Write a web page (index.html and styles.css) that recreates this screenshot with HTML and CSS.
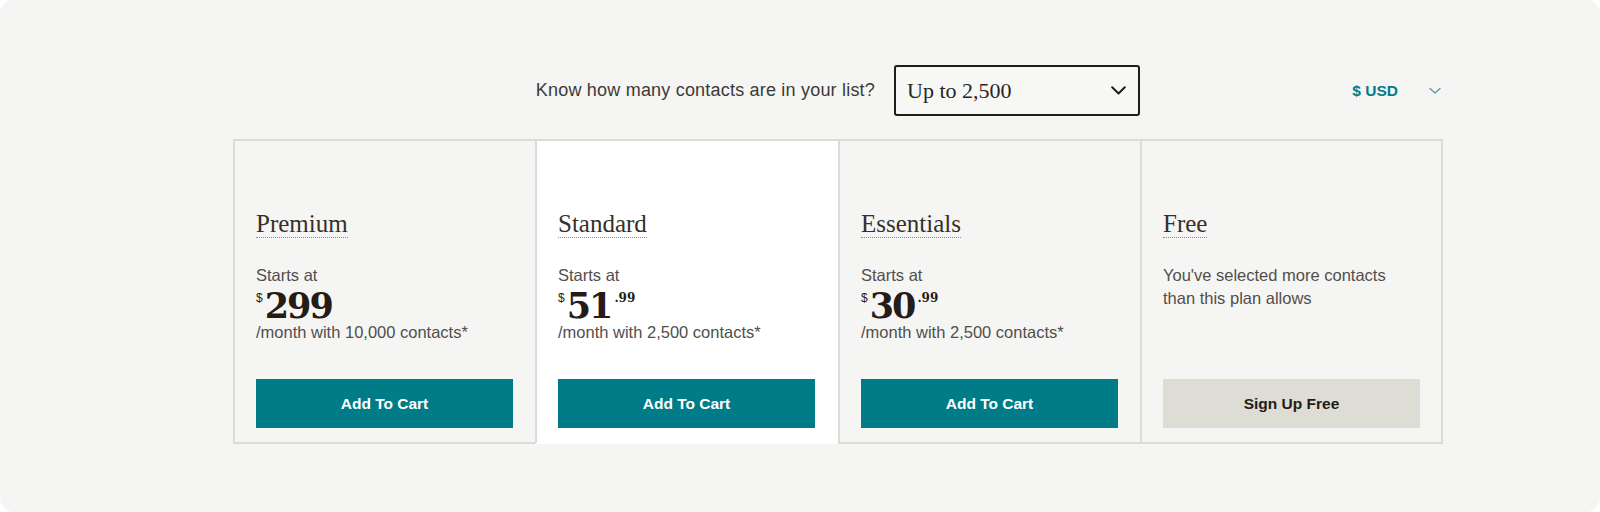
FILE: index.html
```html
<!DOCTYPE html>
<html lang="en">
<head>
<meta charset="utf-8">
<title>Pricing</title>
<link rel="stylesheet" href="styles.css">
</head>
<body>
<div class="panel">
  <div class="content">
    <div class="toolbar">
      <div class="contacts">
        <span class="contacts-label">Know how many contacts are in your list?</span>
        <div class="select">
          <span class="select-value">Up to 2,500</span>
          <svg class="select-chevron" width="15" height="9" viewBox="0 0 15 9"><path d="M1.2 1.2 L7.5 7.5 L13.8 1.2" fill="none" stroke="#241c15" stroke-width="2" stroke-linecap="round" stroke-linejoin="round"/></svg>
        </div>
      </div>
      <div class="currency">
        <span class="currency-value">$ USD</span>
        <svg class="currency-chevron" width="12" height="8" viewBox="0 0 12 8"><path d="M1 1.5 L6 6 L11 1.5" fill="none" stroke="#5a9ca4" stroke-width="1.4" stroke-linecap="round" stroke-linejoin="round"/></svg>
      </div>
    </div>

    <div class="plans">
      <div class="plan">
        <h2 class="plan-name"><span>Premium</span></h2>
        <p class="starts">Starts at</p>
        <p class="price"><sup class="cur">$</sup><span class="amount">299</span></p>
        <p class="per">/month with 10,000 contacts*</p>
        <a class="btn btn-primary">Add To Cart</a>
      </div>
      <div class="plan plan-featured">
        <h2 class="plan-name"><span>Standard</span></h2>
        <p class="starts">Starts at</p>
        <p class="price"><sup class="cur">$</sup><span class="amount">51</span><sup class="cents">.99</sup></p>
        <p class="per">/month with 2,500 contacts*</p>
        <a class="btn btn-primary">Add To Cart</a>
      </div>
      <div class="plan">
        <h2 class="plan-name"><span>Essentials</span></h2>
        <p class="starts">Starts at</p>
        <p class="price"><sup class="cur">$</sup><span class="amount">30</span><sup class="cents">.99</sup></p>
        <p class="per">/month with 2,500 contacts*</p>
        <a class="btn btn-primary">Add To Cart</a>
      </div>
      <div class="plan">
        <h2 class="plan-name"><span>Free</span></h2>
        <p class="note">You've selected more contacts than this plan allows</p>
        <a class="btn btn-secondary">Sign Up Free</a>
      </div>
    </div>
  </div>
</div>
</body>
</html>
```

FILE: styles.css
```css
* { box-sizing: border-box; }

html, body {
  margin: 0;
  padding: 0;
  background: #ffffff;
}

body {
  font-family: "Liberation Sans", Arial, sans-serif;
  color: #241c15;
}

.panel {
  width: 1600px;
  height: 512px;
  background: #f5f5f3;
  border-radius: 14px;
  padding-top: 65px;
}

.content {
  width: 1210px;
  margin-left: 233px;
}

.toolbar {
  display: flex;
  align-items: center;
  height: 51px;
  margin-bottom: 23px;
}

.contacts {
  flex: 1;
  display: flex;
  align-items: center;
  justify-content: flex-end;
  gap: 19px;
}

.contacts-label {
  font-size: 18px;
  letter-spacing: 0.2px;
  color: #3b3a37;
}

.select {
  width: 246px;
  height: 51px;
  border: 2px solid #241c15;
  border-radius: 3px;
  display: flex;
  align-items: center;
  justify-content: space-between;
  padding: 0 12px 0 11px;
  background: #f7f7f5;
}

.select-value {
  font-family: "Liberation Serif", "Times New Roman", serif;
  font-size: 22px;
  color: #2b2520;
}

.currency {
  width: 303px;
  display: flex;
  align-items: center;
  justify-content: flex-end;
  gap: 31px;
  padding-right: 2px;
}

.currency-value {
  font-size: 15.5px;
  font-weight: bold;
  color: #007c89;
}

.plans {
  display: grid;
  grid-template-columns: 302px 303px 302px 303px;
}

.plan {
  display: flex;
  flex-direction: column;
  align-items: flex-start;
  padding: 69px 21px 14px 21px;
  border-top: 2px solid #dcdbd7;
  border-left: 2px solid #dcdbd7;
  border-bottom: 2px solid #dcdbd7;
  background: #f5f5f3;
}

.plan:last-child {
  border-right: 2px solid #dcdbd7;
}

.plan-featured {
  background: #ffffff;
  border-bottom-color: #ffffff;
}

.plan-name {
  margin: 0 0 26px 0;
  font-family: "Liberation Serif", "Times New Roman", serif;
  font-weight: normal;
  font-size: 25px;
  line-height: 27px;
  color: #35302b;
}

.plan-name span {
  display: inline-block;
  border-bottom: 1px dotted #8f8d88;
}

.starts, .per, .note {
  margin: 0;
  font-size: 16.5px;
  line-height: 22px;
  color: #524f4b;
}

.per {
  margin-bottom: 36px;
}

.note {
  line-height: 23px;
  width: 240px;
}

.price {
  margin: 5px 0 0 0;
  height: 30px;
  line-height: 30px;
  display: flex;
  align-items: flex-start;
  color: #241c15;
}

.cur {
  font-family: "Liberation Sans", Arial, sans-serif;
  font-size: 12px;
  line-height: 12px;
  margin-top: 1px;
  margin-right: 2px;
  color: #241c15;
}

.amount {
  font-family: "DejaVu Serif", "Liberation Serif", serif;
  font-weight: bold;
  font-size: 35px;
  letter-spacing: -2px;
}

.cents {
  font-family: "DejaVu Serif", "Liberation Serif", serif;
  font-weight: bold;
  font-size: 12px;
  line-height: 12px;
  margin-top: 1px;
  margin-left: 3px;
}

.btn {
  margin-top: auto;
  width: 257px;
  height: 49px;
  display: flex;
  align-items: center;
  justify-content: center;
  font-size: 15.5px;
  font-weight: bold;
  text-decoration: none;
}

.btn-primary {
  background: #007c89;
  color: #ffffff;
}

.btn-secondary {
  background: #dddcd5;
  color: #241c15;
}
```
